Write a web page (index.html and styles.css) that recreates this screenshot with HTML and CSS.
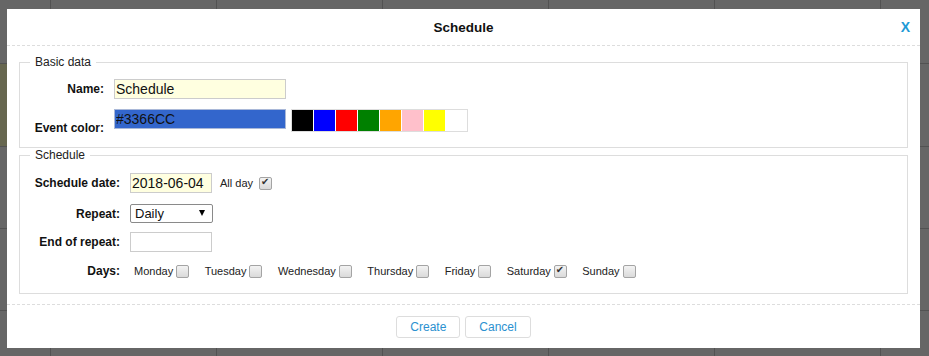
FILE: index.html
```html
<!DOCTYPE html>
<html>
<head>
    <title>Schedule</title>
    <link rel="stylesheet" href="styles.css">
</head>
<body>

<div class="calendar">
    <div class="cell"></div><div class="cell"></div><div class="cell"></div><div class="cell"></div><div class="cell"></div><div class="cell"></div><div class="cell"></div>
    <div class="cell event"></div><div class="cell"></div><div class="cell"></div><div class="cell"></div><div class="cell"></div><div class="cell"></div><div class="cell"></div>
    <div class="cell"></div><div class="cell"></div><div class="cell"></div><div class="cell"></div><div class="cell"></div><div class="cell"></div><div class="cell"></div>
    <div class="cell"></div><div class="cell"></div><div class="cell"></div><div class="cell"></div><div class="cell"></div><div class="cell"></div><div class="cell"></div>
    <div class="cell"></div><div class="cell"></div><div class="cell"></div><div class="cell"></div><div class="cell"></div><div class="cell"></div><div class="cell"></div>
</div>

<div class="overlay"></div>

<div class="dialog">
    <div class="dialog-header">
        <span></span>
        <span class="dialog-title">Schedule</span>
        <a class="dialog-close" href="#">X</a>
    </div>

    <form class="dialog-body">
        <fieldset class="group group-basic">
            <legend>Basic data</legend>
            <div class="row row-name">
                <label class="field-label">Name:</label>
                <input class="text-input wide yellow" type="text" value="Schedule" />
            </div>
            <div class="row row-color">
                <label class="field-label color-label">Event color:</label>
                <input class="text-input wide color-input" type="text" value="#3366CC" />
                <div class="swatches">
                    <span class="swatch sw-black"></span>
                    <span class="swatch sw-blue"></span>
                    <span class="swatch sw-red"></span>
                    <span class="swatch sw-green"></span>
                    <span class="swatch sw-orange"></span>
                    <span class="swatch sw-pink"></span>
                    <span class="swatch sw-yellow"></span>
                    <span class="swatch sw-white"></span>
                </div>
            </div>
        </fieldset>

        <fieldset class="group group-schedule">
            <legend>Schedule</legend>
            <div class="row row-date">
                <label class="field-label">Schedule date:</label>
                <input class="text-input short yellow" type="text" value="2018-06-04" />
                <span class="small-text allday">All day</span>
                <input class="check" type="checkbox" checked />
            </div>
            <div class="row row-repeat">
                <label class="field-label">Repeat:</label>
                <div class="select-wrap">
                    <select class="select">
                        <option>Daily</option>
                        <option>Weekly</option>
                        <option>Monthly</option>
                    </select>
                    <span class="select-arrow"></span>
                </div>
            </div>
            <div class="row row-end">
                <label class="field-label">End of repeat:</label>
                <input class="text-input short" type="text" value="" />
            </div>
            <div class="row row-days">
                <label class="field-label">Days:</label>
                <div class="days">
                    <span class="day small-text">Monday<input class="check" type="checkbox" /></span>
                    <span class="day small-text">Tuesday<input class="check" type="checkbox" /></span>
                    <span class="day small-text">Wednesday<input class="check" type="checkbox" /></span>
                    <span class="day small-text">Thursday<input class="check" type="checkbox" /></span>
                    <span class="day small-text">Friday<input class="check" type="checkbox" /></span>
                    <span class="day small-text">Saturday<input class="check" type="checkbox" checked /></span>
                    <span class="day small-text">Sunday<input class="check" type="checkbox" /></span>
                </div>
            </div>
        </fieldset>
    </form>

    <div class="dialog-footer">
        <button class="btn" type="button">Create</button>
        <button class="btn" type="button">Cancel</button>
    </div>
</div>

</body>
</html>
```

FILE: styles.css
```css
html, body {
    margin: 0;
    height: 100%;
    overflow: hidden;
}
body {
    font-family: "Liberation Sans", Arial, sans-serif;
    font-size: 12px;
    color: #111;
}

/* calendar behind the modal */
.calendar {
    display: grid;
    grid-template-columns: 50px repeat(5, 165px) 1fr;
    grid-template-rows: 63px 82px 81px 81px 1fr;
    gap: 1px;
    height: 100vh;
    background-color: #cdcdcd;
}
.cell {
    background-color: #fff;
}
.cell.event {
    background-color: #ffffc6;
}
.overlay {
    position: fixed;
    top: 0;
    left: 0;
    right: 0;
    bottom: 0;
    background-color: rgba(0, 0, 0, 0.6);
}

/* dialog */
.dialog {
    position: absolute;
    left: 7px;
    top: 9px;
    width: 913px;
    background-color: #fff;
}
.dialog-header {
    display: grid;
    grid-template-columns: 1fr auto 1fr;
    align-items: center;
    height: 36px;
    padding: 0 10px;
    border-bottom: 1px dashed #ddd;
}
.dialog-title {
    font-size: 13.5px;
    font-weight: bold;
    color: #111;
}
.dialog-close {
    justify-self: end;
    font-size: 14px;
    font-weight: bold;
    color: #1e9ad6;
    text-decoration: none;
}
.dialog-body {
    margin: 0;
    padding: 9px 0 10px;
}

.group {
    margin: 0 12px;
    padding: 0;
    border: 1px solid #ddd;
    min-width: 0;
}
.group legend {
    margin-left: 10px;
    padding: 0 5px;
    font-size: 12px;
    line-height: 14px;
    color: #222;
}
.group-basic {
    padding: 10px 0 15px;
}
.group-schedule {
    padding: 11px 0 15px;
}

.row {
    display: flex;
    align-items: center;
}
.field-label {
    flex: none;
    text-align: right;
    font-weight: bold;
    font-size: 12px;
    line-height: 14px;
    color: #111;
    margin-right: 10px;
}
.group-basic .field-label {
    width: 84px;
}
.group-schedule .field-label {
    width: 100px;
}

.row-name {
    height: 20px;
    margin-bottom: 10px;
}
.row-color {
    align-items: flex-start;
    height: 23px;
}
.color-label {
    align-self: flex-end;
    margin-bottom: -3px;
}

.text-input {
    box-sizing: border-box;
    height: 20px;
    margin: 0;
    padding: 0 1px;
    border: 1px solid #ccc;
    font-family: "Liberation Sans", Arial, sans-serif;
    font-size: 14px;
    color: #111;
    background-color: #fff;
    outline: none;
}
.text-input.wide {
    width: 172px;
}
.text-input.short {
    width: 82px;
}
.text-input.yellow {
    background-color: #ffffe0;
}
.color-input {
    background-color: #3366cc;
    border-color: #a9b8d8;
}

.swatches {
    display: flex;
    gap: 1px;
    margin-left: 5px;
    border: 1px solid #ddd;
    background-color: #fff;
}
.swatch {
    width: 21px;
    height: 21px;
}
.sw-black { background-color: #000; }
.sw-blue { background-color: #00f; }
.sw-red { background-color: #f00; }
.sw-green { background-color: #008000; }
.sw-orange { background-color: #ffa500; }
.sw-pink { background-color: #ffc0cb; }
.sw-yellow { background-color: #ff0; }
.sw-white { background-color: #fff; }

.small-text {
    font-size: 11px;
    color: #222;
}

.row-date {
    height: 20px;
    margin-bottom: 11px;
}
.allday {
    margin-left: 8px;
}
.row-date .check {
    margin-left: 6px;
}
.row-repeat {
    height: 19px;
    margin-bottom: 9px;
}
.row-end {
    height: 20px;
    margin-bottom: 12px;
}
.row-days {
    height: 14px;
}

.select-wrap {
    position: relative;
    display: flex;
}
.select {
    appearance: none;
    -webkit-appearance: none;
    box-sizing: border-box;
    width: 83px;
    height: 19px;
    margin: 0;
    padding: 0 0 0 4px;
    border: 1px solid #8a8a8a;
    border-radius: 2px;
    background-color: #fff;
    font-family: "Liberation Sans", Arial, sans-serif;
    font-size: 13px;
    color: #111;
}
.select-arrow {
    position: absolute;
    right: 8px;
    top: 6px;
    width: 0;
    height: 0;
    border-left: 3px solid transparent;
    border-right: 3px solid transparent;
    border-top: 6px solid #000;
    pointer-events: none;
}

.check {
    appearance: none;
    -webkit-appearance: none;
    box-sizing: border-box;
    position: relative;
    width: 13px;
    height: 13px;
    margin: 0;
    border: 1px solid #a4a4a4;
    border-radius: 2px;
    background: linear-gradient(#f3f3f3, #dadada);
    flex: none;
}
.check:checked::after {
    content: "\2714";
    position: absolute;
    left: 1px;
    top: -2px;
    font-family: "DejaVu Sans", sans-serif;
    font-size: 10px;
    color: #333;
}

.days {
    display: flex;
    align-items: center;
    padding-left: 4px;
}
.day {
    display: flex;
    align-items: center;
    margin-right: 15.5px;
}
.day .check {
    margin-left: 3px;
}

.dialog-footer {
    display: flex;
    justify-content: center;
    gap: 5px;
    padding: 11px 0 10px;
    border-top: 1px dashed #ddd;
}
.btn {
    height: 22px;
    margin: 0;
    padding: 3px 13px;
    border: 1px solid #ddd;
    border-radius: 3px;
    background-color: #fff;
    font-family: "Liberation Sans", Arial, sans-serif;
    font-size: 12px;
    line-height: 14px;
    color: #2b91d0;
    cursor: pointer;
}
```
